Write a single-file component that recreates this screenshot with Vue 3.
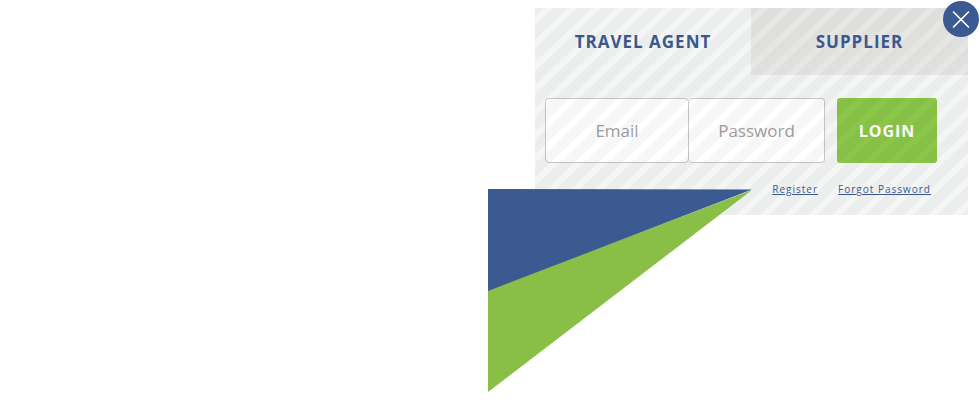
<script setup>
import { ref } from 'vue'

const tab = ref('agent')
const email = ref('')
const password = ref('')
</script>

<template>
  <main class="page">
    <section class="panel" aria-label="Account login">
      <button class="close" type="button" aria-label="Close">
        <svg viewBox="0 0 36 36" aria-hidden="true">
          <path d="M10.5 11 25.5 26M25.5 11 10.5 26" />
        </svg>
      </button>
      <div class="tabs" role="tablist">
        <button
          class="tab"
          :class="{ active: tab === 'agent' }"
          type="button"
          role="tab"
          :aria-selected="tab === 'agent'"
          @click="tab = 'agent'"
        >TRAVEL AGENT</button>
        <button
          class="tab"
          :class="{ active: tab === 'supplier' }"
          type="button"
          role="tab"
          :aria-selected="tab === 'supplier'"
          @click="tab = 'supplier'"
        >SUPPLIER</button>
      </div>
      <form class="form" @submit.prevent>
        <div class="fields">
          <input v-model="email" class="email" type="email" placeholder="Email" aria-label="Email" />
          <input v-model="password" class="password" type="password" placeholder="Password" aria-label="Password" />
        </div>
        <button class="login" type="submit">LOGIN</button>
      </form>
      <nav class="links">
        <a href="#register">Register</a>
        <a href="#forgot">Forgot Password</a>
      </nav>
    </section>
    <svg class="pennant" viewBox="0 0 264 203" aria-hidden="true">
      <path class="green" d="M0 101V203L264 1Z" />
      <path class="blue" d="M0 0 264 0.6 0 102Z" />
    </svg>
  </main>
</template>

<style>
body {
  margin: 0;
  background: #fff;
}
</style>

<style scoped>
.page {
  position: relative;
  display: flex;
  justify-content: flex-end;
  align-items: flex-start;
  padding: 8px 12px 200px;
  font-family: "Open Sans", "Noto Sans", sans-serif;
}
.panel {
  position: relative;
  flex: 0 1 433px;
  min-width: 0;
  background: #f4f6f5;
}
.panel::after {
  content: "";
  position: absolute;
  inset: 0;
  background: linear-gradient(
    to bottom right,
    rgba(0, 0, 0, 0.03) 0 17%,
    transparent 20% 36%,
    rgba(0, 0, 0, 0.03) 39% 67%,
    transparent 70% 86%,
    rgba(0, 0, 0, 0.03) 89%
  );
  background-size: 24px 23px;
  pointer-events: none;
}
.tabs {
  display: grid;
  grid-template-columns: 216fr 217fr;
}
.tab {
  height: 67px;
  border: 0;
  padding: 0;
  background: #e6e6e5;
  color: #3c5a92;
  font: 700 17px/24px "Open Sans", sans-serif;
  letter-spacing: 1px;
}
.tab.active {
  background: transparent;
}
.form {
  display: flex;
  gap: 12px;
  padding: 23px 31px 0 10px;
}
.fields {
  display: flex;
  flex: 1;
  min-width: 0;
}
.fields input {
  box-sizing: border-box;
  min-width: 0;
  height: 65px;
  margin: 0;
  border: 1px solid #c6c6c6;
  border-radius: 4px;
  padding: 0 8px;
  background: #fff;
  color: #555;
  text-align: center;
  font: 400 17px/24px "Open Sans", sans-serif;
}
.fields input::placeholder {
  color: #a0a0a0;
  opacity: 1;
}
.fields .email {
  flex: 144;
}
.fields .password {
  flex: 136;
  border-left: 0;
}
.login {
  width: 100px;
  border: 0;
  border-radius: 3px;
  padding: 0;
  background: #8bc649;
  color: #fff;
  font: 700 16px/24px "Open Sans", sans-serif;
  letter-spacing: 1px;
}
.links {
  display: flex;
  justify-content: flex-end;
  gap: 20px;
  padding: 18px 37px 18px 10px;
  font-size: 10px;
  line-height: 16px;
  letter-spacing: 1px;
}
.links a {
  color: #3c5a92;
}
.close {
  position: absolute;
  z-index: 2;
  top: -7px;
  right: -11px;
  width: 36px;
  height: 36px;
  border: 0;
  border-radius: 50%;
  padding: 0;
  background: #3c5a92;
}
.close svg {
  display: block;
  width: 36px;
  height: 36px;
}
.close path {
  fill: none;
  stroke: #fff;
  stroke-width: 1.6;
  stroke-linecap: round;
}
.pennant {
  position: absolute;
  top: 189px;
  right: 228px;
  width: 264px;
  height: 203px;
}
.blue {
  fill: #3c5a92;
}
.green {
  fill: #8abf47;
}
</style>
